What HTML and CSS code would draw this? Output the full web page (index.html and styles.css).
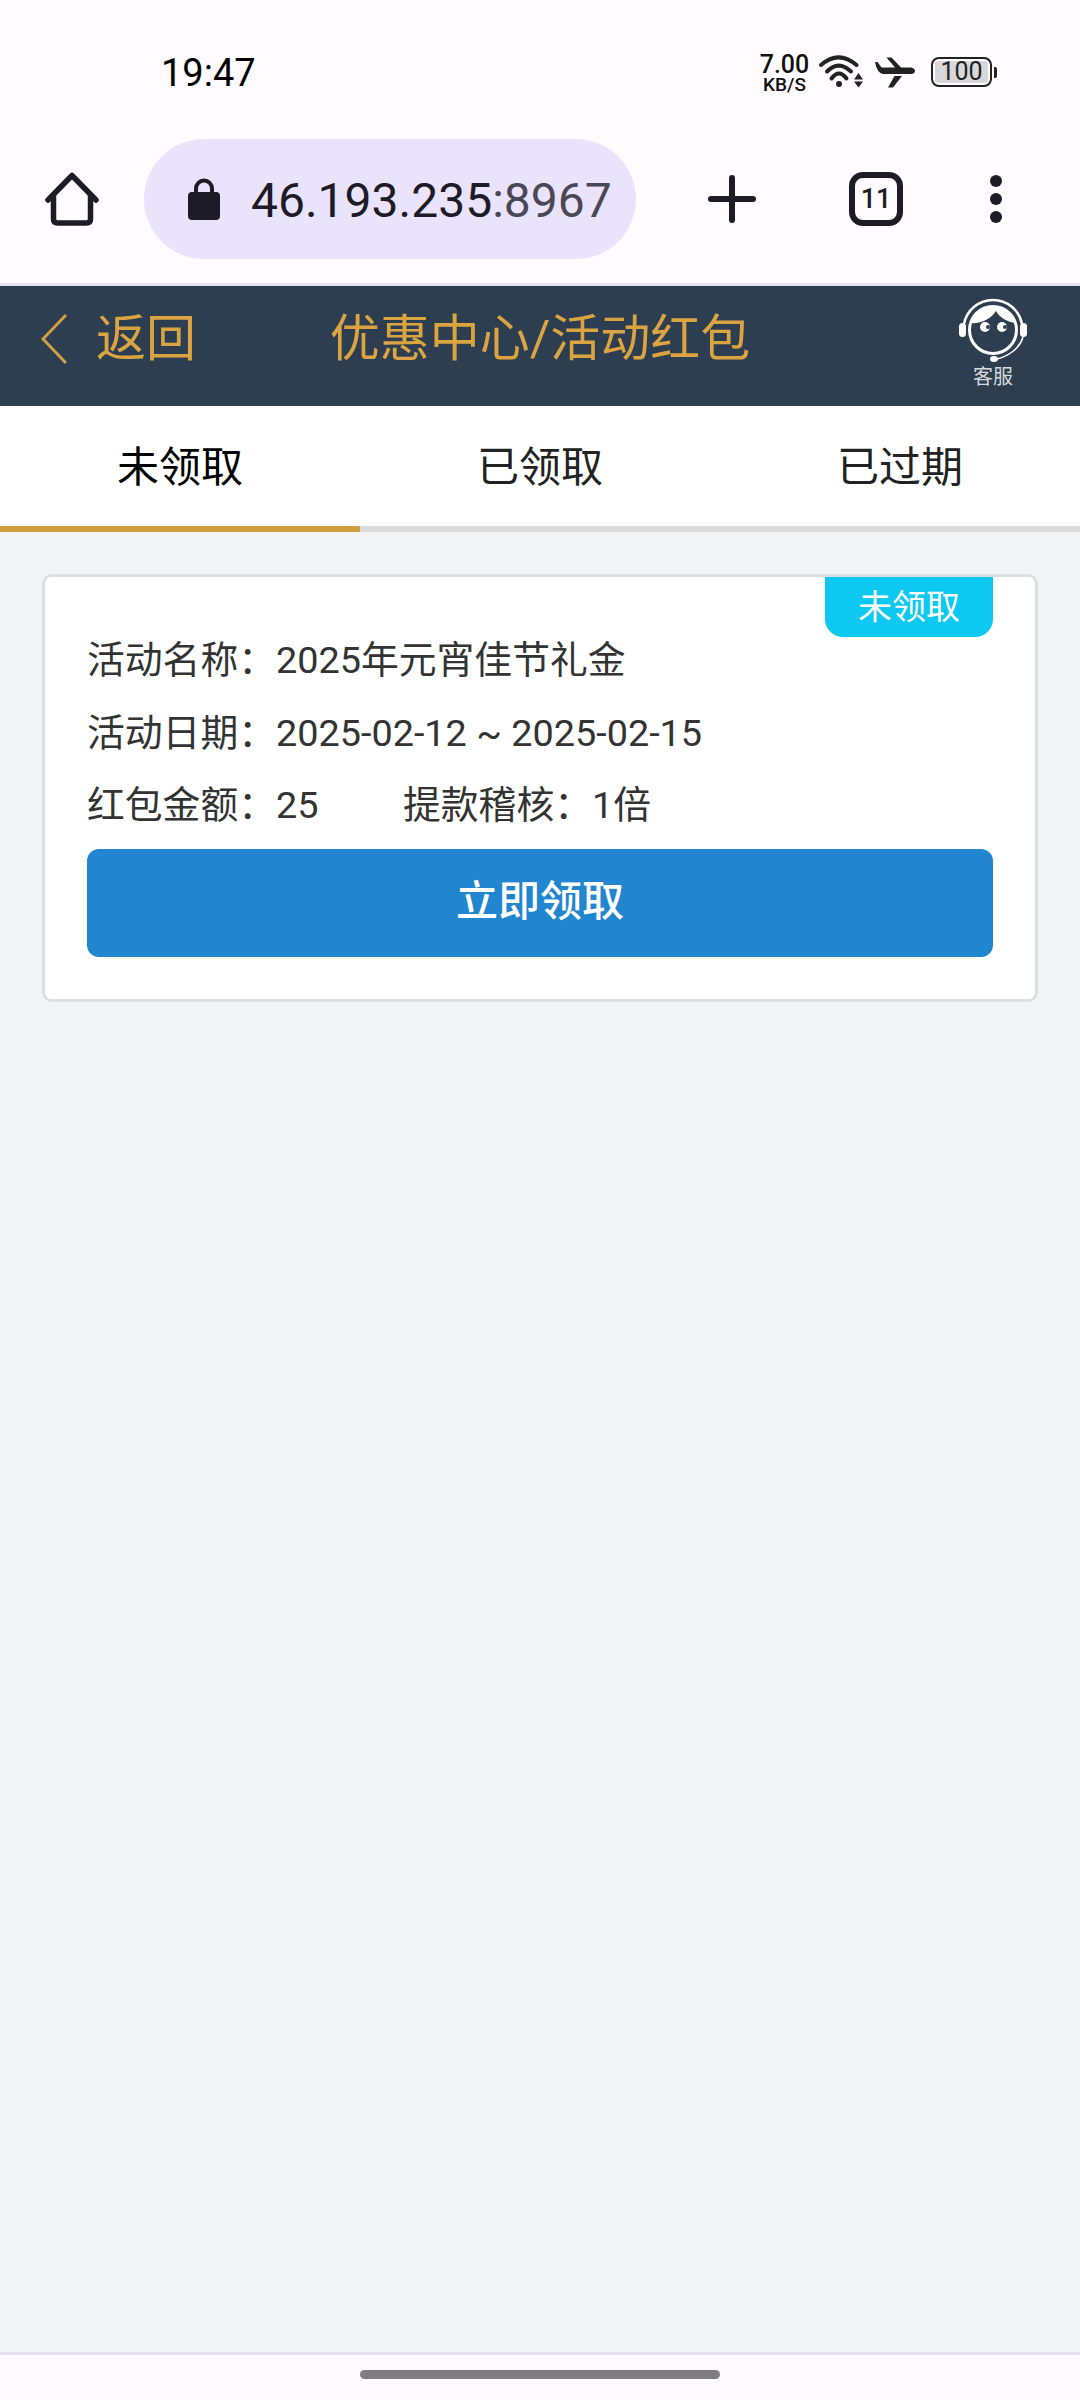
FILE: index.html
```html
<!DOCTYPE html>
<html lang="zh-CN">
<head>
  <meta charset="UTF-8" />
  <meta name="viewport" content="width=device-width, initial-scale=1.0" />
  <title>优惠中心/活动红包</title>
  <link rel="stylesheet" href="styles.css">
</head>
<body>
  <div class="statusbar">
    <span class="time">19:47</span>
    <div class="status-icons">
      <div class="speed"><span class="speed-num">7.00</span><span class="speed-unit">KB/S</span></div>
      <svg class="ic-wifi" width="44" height="33" viewBox="0 0 44 33">
        <path d="M2 10Q19.500 -5.400 37.500 10" fill="none" stroke="#222" stroke-width="4" stroke-linecap="round"/>
        <path d="M8 16.500Q19.500 4.700 32 16.500" fill="none" stroke="#222" stroke-width="4" stroke-linecap="round"/>
        <path d="M12.500 23.500Q20 13.300 27.500 23.500" fill="none" stroke="#222" stroke-width="4" stroke-linecap="round"/>
        <circle cx="20" cy="29" r="3" fill="#222"/>
        <path d="M35 24.500L39.500 18L44 24.500ZM35 26.500L39.500 32.500L44 26.500Z" fill="#222"/>
      </svg>
      <svg class="ic-plane" width="40" height="31" viewBox="0 0 40 31">
        <path d="M0 5L2.500 5L6.500 10.500L20 10.500L11.500 .5L16.500 .5L26 10.500L36 10.500Q40 11.500 40 14Q40 16.500 36 17L8 17Q2 16 0 5Z" fill="#222"/>
        <path d="M19.500 19L27 19L18 30.500L13 30.500Z" fill="#222"/>
      </svg>
      <div class="battery">
        <div class="battery-body"><span class="battery-level">100</span></div>
        <div class="battery-nub"></div>
      </div>
    </div>
  </div>

  <div class="toolbar">
    <svg class="ic-home" width="54" height="54" viewBox="0 0 54 54">
      <path d="M3 28L27 3.500L51 28" fill="none" stroke="#1d1b26" stroke-width="5.500" stroke-linecap="round" stroke-linejoin="round"/>
      <path d="M8.500 23V47Q8.500 51 12.500 51H41.500Q45.500 51 45.500 47V23" fill="none" stroke="#1d1b26" stroke-width="5.500"/>
    </svg>
    <div class="urlbar">
      <svg class="ic-lock" width="32" height="42" viewBox="0 0 32 42">
        <path d="M8 16V10.500a8 8 0 0 1 16 0V16" fill="none" stroke="#1d1b26" stroke-width="4"/>
        <rect x="0" y="14" width="32" height="28" rx="4" fill="#1d1b26"/>
      </svg>
      <span class="url">46.193.235<span class="url-port">:8967</span></span>
    </div>
    <svg class="ic-plus" width="48" height="48" viewBox="0 0 48 48">
      <path d="M24 3V45M3 24H45" stroke="#1d1b26" stroke-width="6" stroke-linecap="round"/>
    </svg>
    <div class="tabcount">11</div>
    <div class="menu-dots"><i></i><i></i><i></i></div>
  </div>

  <header class="topbar">
    <div class="back">
      <svg width="26" height="50" viewBox="0 0 26 50">
        <path d="M25 1L2 25L25 49" fill="none" stroke="#d09f42" stroke-width="3"/>
      </svg>
      <span>返回</span>
    </div>
    <h1 class="title">优惠中心/活动红包</h1>
    <div class="service">
      <svg width="68" height="70" viewBox="0 0 68 70">
        <circle cx="34" cy="36" r="23.500" fill="none" stroke="#fff" stroke-width="3"/>
        <path d="M11 29A24 24 0 0 1 57 29C48 28 41 24 37 17C32 25 22 30 11 29Z" fill="#fff"/>
        <path d="M5 30A29.500 29.500 0 0 1 63 30" fill="none" stroke="#fff" stroke-width="2.500"/>
        <rect x="0" y="29" width="7" height="14" rx="3.500" fill="#fff"/>
        <rect x="61" y="29" width="7" height="14" rx="3.500" fill="#fff"/>
        <path d="M64 43C61 54 50 62 38 65" fill="none" stroke="#fff" stroke-width="1.500"/>
        <ellipse cx="35" cy="65" rx="4" ry="3" fill="#fff"/>
        <circle cx="26" cy="33" r="5" fill="#fff"/>
        <circle cx="43" cy="33" r="5" fill="#fff"/>
        <circle cx="29" cy="33" r="2" fill="#2d3e50"/>
        <circle cx="46" cy="33" r="2" fill="#2d3e50"/>
      </svg>
      <span>客服</span>
    </div>
  </header>

  <nav class="tabs">
    <div class="tab active">未领取</div>
    <div class="tab">已领取</div>
    <div class="tab">已过期</div>
  </nav>

  <main class="content">
    <section class="card">
      <span class="badge">未领取</span>
      <p class="line">活动名称：2025年元宵佳节礼金</p>
      <p class="line">活动日期：2025-02-12 ~ 2025-02-15</p>
      <p class="line"><span class="amount">红包金额：25</span><span>提款稽核：1倍</span></p>
      <button class="claim" type="button">立即领取</button>
    </section>
  </main>

  <footer class="navbar"><div class="handle"></div></footer>
</body>
</html>
```

FILE: styles.css
```css
* {
  box-sizing: border-box;
}
body {
  margin: 0;
  height: 2400px;
  display: flex;
  flex-direction: column;
  font-family: Roboto, "Noto Sans CJK SC", sans-serif;
  background: #f2f4f6;
  overflow: hidden;
}
svg {
  display: block;
  flex-shrink: 0;
}

/* phone status bar */
.statusbar {
  height: 139px;
  padding: 50px 83px 0 161px;
  display: flex;
  justify-content: space-between;
  align-items: flex-start;
  background: #fffbff;
}
.time {
  font-size: 38px;
  line-height: 46px;
  color: #000;
}
.status-icons {
  display: flex;
  align-items: flex-start;
  padding-top: 5px;
}
.speed {
  display: flex;
  flex-direction: column;
  align-items: center;
  width: 47px;
  margin-right: 11px;
  color: #111;
  font-weight: 500;
}
.speed-num {
  font-size: 25px;
  line-height: 19px;
}
.speed-unit {
  font-size: 19px;
  line-height: 15px;
  margin-top: 3px;
}
.ic-wifi {
  margin-right: 12px;
}
.ic-plane {
  margin-top: 2px;
  margin-right: 16px;
}
.battery {
  display: flex;
  align-items: center;
  margin-top: 2px;
}
.battery-body {
  width: 61px;
  height: 30px;
  border: 2.500px solid #222;
  border-radius: 8px;
  padding: 2px;
}
.battery-level {
  display: block;
  height: 100%;
  background: #d8d8d8;
  border-radius: 4px;
  font-size: 25px;
  line-height: 21px;
  text-align: center;
  color: #222;
}
.battery-nub {
  width: 3px;
  height: 11px;
  margin-left: 2px;
  background: #222;
  border-radius: 0 2px 2px 0;
}

/* browser toolbar */
.toolbar {
  height: 147px;
  padding: 0 0 24px 45px;
  display: flex;
  align-items: center;
  background: #fffbff;
  border-bottom: 3px solid #e7e3f0;
}
.urlbar {
  width: 492px;
  height: 120px;
  margin-left: 45px;
  padding-left: 44px;
  display: flex;
  align-items: center;
  gap: 31px;
  background: #e9e3fc;
  border-radius: 60px;
}
.url {
  padding-top: 2px;
  font-size: 48px;
  color: #1d1b26;
  white-space: nowrap;
}
.url-port {
  color: #4a4855;
}
.ic-plus {
  margin-left: 72px;
}
.tabcount {
  width: 54px;
  height: 54px;
  margin-left: 93px;
  border: 6px solid #1d1b26;
  border-radius: 14px;
  font-size: 27px;
  font-weight: 500;
  line-height: 42px;
  text-align: center;
  color: #1d1b26;
}
.menu-dots {
  margin-left: 87px;
  display: flex;
  flex-direction: column;
  gap: 6px;
}
.menu-dots i {
  width: 12px;
  height: 12px;
  border-radius: 50%;
  background: #1d1b26;
}

/* site header */
.topbar {
  height: 120px;
  display: grid;
  grid-template-columns: 1fr auto 1fr;
  background: #2d3e50;
  color: #d9a441;
}
.back {
  height: 106px;
  padding-left: 41px;
  display: flex;
  align-items: center;
  gap: 29px;
  font-size: 50px;
  line-height: 106px;
}
.title {
  margin: 0;
  font-size: 50px;
  font-weight: 400;
  line-height: 106px;
}
.service {
  justify-self: end;
  padding: 8px 53px 0 0;
  display: flex;
  flex-direction: column;
  align-items: center;
  font-size: 20px;
  line-height: 26px;
  color: #d5d9de;
}

/* tabs */
.tabs {
  height: 126px;
  display: flex;
  background: #fff;
}
.tab {
  flex: 1;
  padding-top: 32px;
  border-bottom: 6px solid #dcdcdc;
  font-size: 42px;
  line-height: 60px;
  text-align: center;
  color: #222;
}
.tab.active {
  border-bottom-color: #cf9e3f;
  color: #000;
}

/* card */
.content {
  flex: 1;
  padding: 42px 42px 0;
}
.card {
  position: relative;
  padding: 47px 42px 42px;
  background: #fff;
  border: 3px solid #dcdfe0;
  border-radius: 10px;
}
.badge {
  position: absolute;
  top: 0;
  right: 42px;
  width: 168px;
  height: 60px;
  background: #0dc8f0;
  border-radius: 0 0 18px 18px;
  font-size: 34px;
  line-height: 60px;
  text-align: center;
  color: #fff;
}
.line {
  margin: 0;
  font-size: 37.800px;
  line-height: 72.500px;
  color: #333;
}
.amount {
  display: inline-block;
  width: 316px;
}
.claim {
  display: block;
  width: 100%;
  height: 108px;
  margin-top: 7px;
  padding: 0 0 10px;
  border: none;
  border-radius: 12px;
  background: #2185d0;
  font-family: inherit;
  font-size: 42px;
  font-weight: 500;
  color: #fff;
}

/* gesture bar */
.navbar {
  height: 48px;
  padding-top: 15px;
  background: #fefbff;
  border-top: 3px solid #e3e0ee;
}
.handle {
  width: 360px;
  height: 9px;
  margin: 0 auto;
  background: #7e7c80;
  border-radius: 5px;
}
```
